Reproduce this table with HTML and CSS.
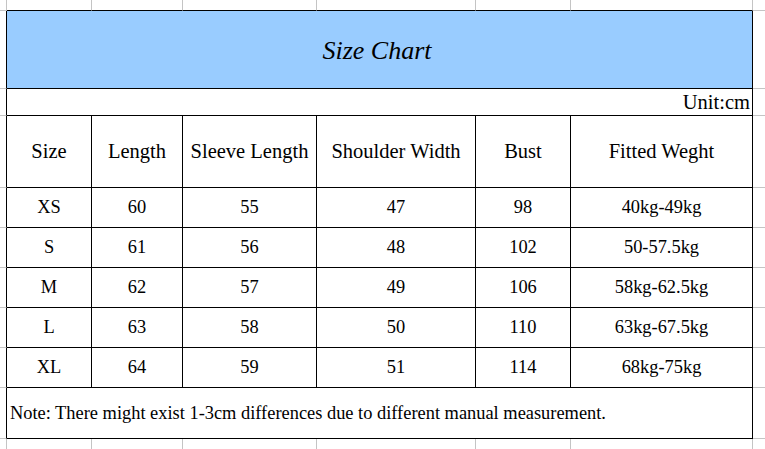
FILE: index.html
```html
<!DOCTYPE html>
<html>
<head>
<meta charset="utf-8">
<link rel="stylesheet" href="styles.css">
<title>Size Chart</title>
</head>
<body>
<div class="sheet">
  <!-- top strip -->
  <div class="c"></div>
  <div class="c bb"></div><div class="c bb"></div><div class="c bb"></div><div class="c bb"></div><div class="c bb"></div><div class="c bb"></div>
  <div class="c edge-r"></div>

  <!-- title -->
  <div class="c br"></div>
  <div class="c bb br title span6">Size Chart</div>
  <div class="c edge-r"></div>

  <!-- unit -->
  <div class="c br"></div>
  <div class="c bb br unit span6">Unit:cm</div>
  <div class="c edge-r"></div>

  <!-- header -->
  <div class="c br"></div>
  <div class="c bb br hd">Size</div>
  <div class="c bb br hd">Length</div>
  <div class="c bb br hd">Sleeve Length</div>
  <div class="c bb br hd">Shoulder Width</div>
  <div class="c bb br hd">Bust</div>
  <div class="c bb br hd">Fitted Weght</div>
  <div class="c edge-r"></div>

  <div class="c br"></div>
  <div class="c bb br td">XS</div><div class="c bb br td">60</div><div class="c bb br td">55</div><div class="c bb br td">47</div><div class="c bb br td">98</div><div class="c bb br td">40kg-49kg</div>
  <div class="c edge-r"></div>

  <div class="c br"></div>
  <div class="c bb br td">S</div><div class="c bb br td">61</div><div class="c bb br td">56</div><div class="c bb br td">48</div><div class="c bb br td">102</div><div class="c bb br td">50-57.5kg</div>
  <div class="c edge-r"></div>

  <div class="c br"></div>
  <div class="c bb br td">M</div><div class="c bb br td">62</div><div class="c bb br td">57</div><div class="c bb br td">49</div><div class="c bb br td">106</div><div class="c bb br td">58kg-62.5kg</div>
  <div class="c edge-r"></div>

  <div class="c br"></div>
  <div class="c bb br td">L</div><div class="c bb br td">63</div><div class="c bb br td">58</div><div class="c bb br td">50</div><div class="c bb br td">110</div><div class="c bb br td">63kg-67.5kg</div>
  <div class="c edge-r"></div>

  <div class="c br"></div>
  <div class="c bb br td">XL</div><div class="c bb br td">64</div><div class="c bb br td">59</div><div class="c bb br td">51</div><div class="c bb br td">114</div><div class="c bb br td">68kg-75kg</div>
  <div class="c edge-r"></div>

  <!-- note -->
  <div class="c br"></div>
  <div class="c bb br note span6">Note: There might exist 1-3cm differences due to different manual measurement.</div>
  <div class="c edge-r"></div>

  <!-- bottom strip -->
  <div class="c nb"></div>
  <div class="c nb"></div><div class="c nb"></div><div class="c nb"></div><div class="c nb"></div><div class="c nb"></div><div class="c nb"></div>
  <div class="c nb edge-r"></div>
</div>
</body>
</html>
```

FILE: styles.css
```css
html, body {
  margin: 0;
  padding: 0;
  background: #ffffff;
}

body {
  width: 765px;
  height: 449px;
  overflow: hidden;
  font-family: "Liberation Serif", "Times New Roman", serif;
  color: #000000;
}

.sheet {
  display: grid;
  grid-template-columns: 7px 85px 91px 134px 159px 95px 182px 1fr;
  grid-template-rows: 11px 78px 27px 72px 40px 40px 40px 40px 40px 51px 10px;
  width: 765px;
  height: 449px;
}

.c {
  box-sizing: border-box;
  border-right: 1px solid #c4c4c4;
  border-bottom: 1px solid #c4c4c4;
  display: flex;
  align-items: center;
  justify-content: center;
  white-space: nowrap;
  overflow: hidden;
}

.c.bb { border-bottom-color: #000000; }
.c.br { border-right-color: #000000; }
.c.edge-r { border-right: none; }
.c.nb { border-bottom: none; }

.span6 { grid-column: span 6; }

.title {
  background: #99ccff;
  font-size: 26px;
  font-style: italic;
  padding-top: 3px;
  padding-right: 5px;
}

.unit {
  justify-content: flex-end;
  font-size: 20.5px;
  padding-right: 2px;
}

.hd { font-size: 20.5px; }

.td { font-size: 18.4px; }

.note {
  justify-content: flex-start;
  font-size: 18.4px;
  padding-left: 3px;
}
```
